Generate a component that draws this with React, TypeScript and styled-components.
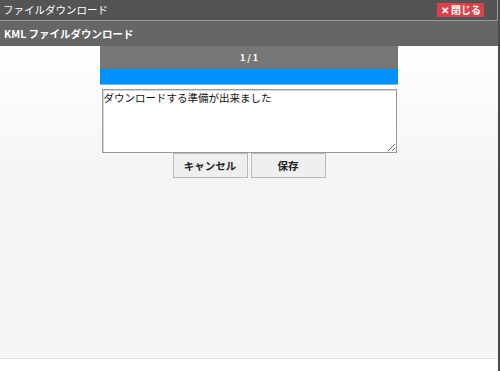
import styled, { createGlobalStyle } from 'styled-components';

const FONT = `"Noto Sans CJK JP", "Noto Sans", sans-serif`;

const GlobalStyle = createGlobalStyle`
  html, body {
    margin: 0;
    padding: 0;
    background: #ffffff;
  }
  body {
    font-family: ${FONT};
  }
`;

function App() {
  return (
    <>
      <GlobalStyle />
      <Window>
        <TitleBar>
          <Title>ファイルダウンロード</Title>
          <CloseButton>✕ 閉じる</CloseButton>
        </TitleBar>
        <SubHeader>KML ファイルダウンロード</SubHeader>
        <Content>
          <Panel>
            <PanelHeader>1 / 1</PanelHeader>
            <ProgressBar />
            <Message readOnly defaultValue="ダウンロードする準備が出来ました" />
            <ButtonRow>
              <ActionButton>キャンセル</ActionButton>
              <ActionButton>保存</ActionButton>
            </ButtonRow>
          </Panel>
        </Content>
        <Footer />
      </Window>
    </>
  );
}

const Window = styled.div`
  width: 500px;
  height: 371px;
  box-sizing: border-box;
  display: flex;
  flex-direction: column;
  border-right: 2px solid #4a4a4a;
  overflow: hidden;
`;

const TitleBar = styled.div`
  height: 20px;
  flex: none;
  display: flex;
  align-items: center;
  justify-content: space-between;
  padding: 0 13px 0 3px;
  background: #545454;
  border-bottom: 1px solid #9a9a9a;
  border-right: 1px solid #9a9a9a;
`;

const Title = styled.span`
  color: #ffffff;
  font-size: 10.5px;
  line-height: 20px;
`;

const CloseButton = styled.span`
  display: flex;
  align-items: center;
  height: 14px;
  padding: 0 3px 0 4px;
  background: #d9414c;
  color: #ffffff;
  font-size: 10px;
  font-weight: bold;
  line-height: 14px;
`;

const SubHeader = styled.div`
  height: 25px;
  flex: none;
  display: flex;
  align-items: center;
  padding: 0 4px;
  background: #666666;
  color: #ffffff;
  font-size: 10.5px;
  font-weight: bold;
`;

const Content = styled.div`
  flex: 1;
  display: flex;
  justify-content: center;
  background: linear-gradient(#ffffff, #f5f5f5 40%, #f5f5f5);
`;

const Panel = styled.div`
  width: 298px;
  display: flex;
  flex-direction: column;
  align-items: center;
`;

const PanelHeader = styled.div`
  align-self: stretch;
  height: 23px;
  display: flex;
  align-items: center;
  justify-content: center;
  background: #777777;
  color: #ffffff;
  font-size: 9px;
  font-weight: bold;
`;

const ProgressBar = styled.div`
  align-self: stretch;
  height: 15px;
  background: #0090ff;
  border-bottom: 1px solid #66b8ff;
`;

const Message = styled.textarea`
  width: 295px;
  height: 64px;
  margin-top: 4px;
  box-sizing: border-box;
  padding: 1px 1px 0;
  border: 1px solid #9a9a9a;
  box-shadow: inset 1px 1px 0 #d8d8d8;
  background: #ffffff;
  color: #111111;
  font-family: ${FONT};
  font-size: 10.5px;
  line-height: 13px;
  resize: both;
  outline: none;
`;

const ButtonRow = styled.div`
  display: flex;
  gap: 3px;
`;

const ActionButton = styled.button`
  width: 75px;
  height: 25px;
  box-sizing: border-box;
  border: 1px solid #b9b9b9;
  background: #efefef;
  color: #222222;
  font-family: ${FONT};
  font-size: 10.5px;
  font-weight: bold;
  padding: 0;
  cursor: pointer;
`;

const Footer = styled.div`
  height: 12px;
  flex: none;
  background: #ffffff;
  border-top: 1px solid #e3e3e3;
`;

export default App;
